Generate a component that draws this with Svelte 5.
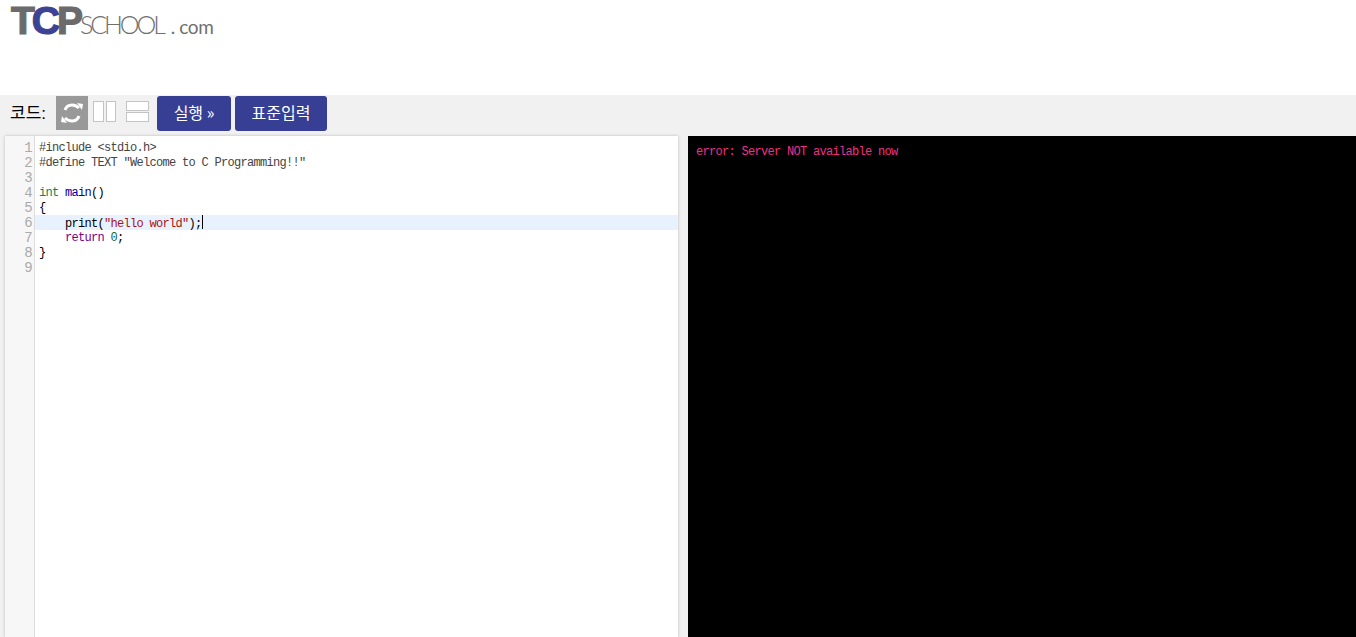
<script lang="ts">
	const lines = [1, 2, 3, 4, 5, 6, 7, 8, 9];
</script>

<div class="page">
	<header class="top">
		<div class="logo">
			<span class="tcp"><span class="g">T</span><span class="b">C</span><span class="g">P</span></span><span class="school">SCHOOL</span><span class="com">. com</span>
		</div>
	</header>

	<div class="toolbar">
		<span class="label">코드:</span>
		<button class="mode active" aria-label="Rotate">
			<svg width="32" height="34" viewBox="0 0 32 34" fill="none" stroke="#fff" stroke-width="3">
				<path d="M9 14c1-3 4-5 7-5 3 0 5 1 7 3" />
				<path d="M21 7l6 1-1 6z" fill="#fff" stroke="none" />
				<path d="M23 20c-1 3-4 5-7 5-3 0-5-1-7-3" />
				<path d="M11 27l-6-1 1-6z" fill="#fff" stroke="none" />
			</svg>
		</button>
		<span class="split cols"><i></i><i></i></span>
		<span class="split rows"><i></i><i></i></span>
		<button class="btn run">실행 »</button>
		<button class="btn stdin">표준입력</button>
	</div>

	<main class="panes">
		<section class="editor">
			<div class="gutter">
				{#each lines as n}
					<div class="num">{n}</div>
				{/each}
			</div>
			<div class="code">
				<div class="ln meta">#include &lt;stdio.h&gt;</div>
				<div class="ln meta">#define TEXT "Welcome to C Programming!!"</div>
				<div class="ln">&nbsp;</div>
				<div class="ln"><span class="type">int</span> <span class="def">main</span>()</div>
				<div class="ln">&#123;</div>
				<div class="ln in current">print(<span class="str">"hello world"</span>);<span class="cursor"></span></div>
				<div class="ln in"><span class="kw">return</span> <span class="nr">0</span>;</div>
				<div class="ln">&#125;</div>
				<div class="ln">&nbsp;</div>
			</div>
		</section>
		<section class="output">error: Server NOT available now</section>
	</main>
</div>

<style>
	:global(body) {
		margin: 0;
		overflow: hidden;
	}

	.page {
		height: 637px;
		display: flex;
		flex-direction: column;
		background: #f1f1f1;
		font-family: 'Liberation Sans', 'Noto Sans CJK KR', sans-serif;
	}

	.top {
		height: 95px;
		flex: none;
		background: #fff;
		padding: 0 0 0 11px;
		box-sizing: border-box;
	}

	.logo {
		display: flex;
		align-items: baseline;
		height: 36px;
		line-height: 41px;
		white-space: nowrap;
	}

	.tcp {
		font-size: 39px;
		font-weight: 700;
		letter-spacing: -3px;
		-webkit-text-stroke: 1.2px;
	}

	.g {
		color: #6b6b6b;
	}

	.b {
		color: #3c4394;
	}

	.school {
		font-family: Lato, sans-serif;
		font-weight: 300;
		font-size: 25px;
		letter-spacing: -3.1px;
		margin-left: 0;
		color: #6f6f6f;
	}

	.com {
		font-family: Lato, sans-serif;
		font-weight: 400;
		font-size: 19px;
		letter-spacing: -0.4px;
		margin-left: 8px;
		color: #6f6f6f;
	}

	.toolbar {
		height: 41px;
		flex: none;
		display: flex;
		align-items: flex-start;
		box-sizing: border-box;
		padding: 1px 0 0 10px;
	}

	.label {
		font-size: 17px;
		line-height: 36px;
		color: #000;
		width: 46px;
		white-space: nowrap;
	}

	.mode {
		width: 32px;
		height: 34px;
		padding: 0;
		border: 0;
		background: #999;
		display: block;
	}

	.split {
		display: flex;
		width: 23px;
		height: 21px;
		margin-top: 5px;
		gap: 2px;
	}

	.split i {
		display: block;
		box-sizing: border-box;
		border: 1px solid #c4c4c4;
		background: #fff;
		flex: 1;
	}

	.cols {
		margin-left: 5px;
	}

	.rows {
		flex-direction: column;
		gap: 1px;
		margin-left: 10px;
	}

	.btn {
		height: 35px;
		border: 0;
		border-radius: 3px;
		background: #373f94;
		color: #fff;
		font-family: 'Noto Sans CJK KR', sans-serif;
		font-size: 16px;
		font-weight: 400;
		padding: 0 0 4px;
	}

	.run {
		width: 74px;
		margin-left: 8px;
	}

	.stdin {
		width: 92px;
		margin-left: 4px;
	}

	.panes {
		flex: 1;
		min-height: 0;
		display: flex;
		padding-left: 5px;
		gap: 10px;
	}

	.editor {
		width: 673px;
		flex: none;
		display: flex;
		background: #fff;
		box-shadow: 0 0 3px #bbb;
		font-family: 'Liberation Mono', monospace;
		font-size: 12px;
		line-height: 15px;
		letter-spacing: -0.7px;
		color: #000;
	}

	.gutter {
		width: 30px;
		flex: none;
		box-sizing: border-box;
		background: #f7f7f7;
		border-right: 1px solid #ddd;
		padding-top: 4px;
		text-align: right;
		color: #aaa;
		font-size: 14px;
	}

	.num {
		height: 15px;
		line-height: 16px;
		padding-right: 2px;
	}

	.code {
		flex: 1;
		padding-top: 4px;
	}

	.ln {
		padding-left: 4px;
		height: 15px;
		line-height: 17px;
		white-space: pre;
		color: #000;
	}

	.in {
		padding-left: 30px;
	}

	.meta {
		color: #444;
	}

	.current {
		background: #e8f2ff;
	}

	.type {
		color: #085;
	}

	.def {
		color: #00a;
	}

	.str {
		color: #a11;
	}

	.kw {
		color: #708;
	}

	.nr {
		color: #164;
	}

	.cursor {
		display: inline-block;
		width: 1px;
		height: 14px;
		background: #000;
		vertical-align: -2px;
	}

	.output {
		flex: 1;
		background: #000;
		color: #f0308a;
		font-family: 'Liberation Mono', monospace;
		font-size: 12px;
		letter-spacing: -0.7px;
		line-height: 15px;
		padding: 9px 8px;
	}
</style>
